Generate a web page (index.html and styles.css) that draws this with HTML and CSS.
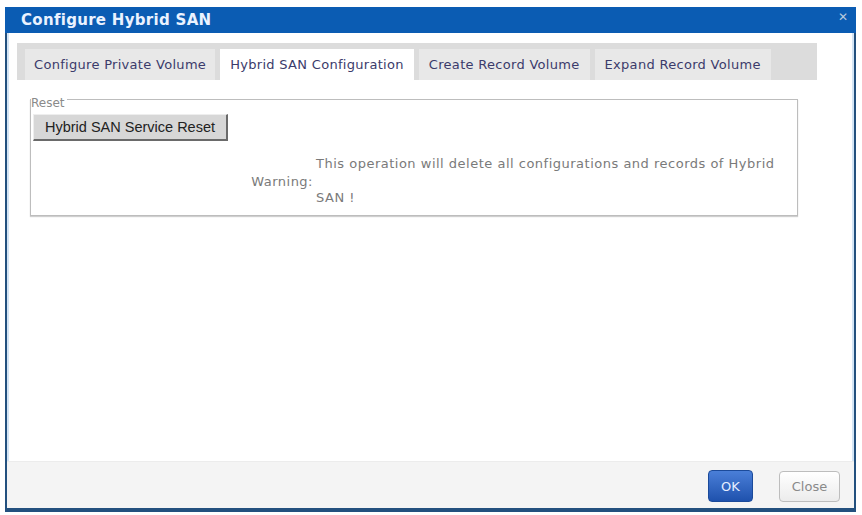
FILE: index.html
```html
<!DOCTYPE html>
<html lang="en">
<head>
  <meta charset="UTF-8">
  <title>Configure Hybrid SAN</title>
  <link rel="stylesheet" href="styles.css">
</head>
<body>
  <div class="dialog">
    <div class="titlebar">
      <span class="title">Configure Hybrid SAN</span>
      <span class="close-x">&#x2715;</span>
    </div>

    <div class="content">
      <div class="tabs">
        <div class="tab">Configure Private Volume</div>
        <div class="tab active">Hybrid SAN Configuration</div>
        <div class="tab">Create Record Volume</div>
        <div class="tab">Expand Record Volume</div>
      </div>

      <div class="group">
        <span class="group-label">Reset</span>
        <button class="btn-reset">Hybrid SAN Service Reset</button>
        <div class="warn-row">
          <div class="warn-label">Warning:</div>
          <div class="warn-text">This operation will delete all configurations and records of Hybrid SAN !</div>
        </div>
      </div>
    </div>

    <div class="footer">
      <button class="btn btn-ok">OK</button>
      <button class="btn btn-close">Close</button>
    </div>
  </div>
</body>
</html>
```

FILE: styles.css
```css
body {
  margin: 0;
  background: #fff;
  font-family: "DejaVu Sans", Verdana, sans-serif;
}

.dialog {
  margin: 7px 0 0 5px;
  width: 851px;
  height: 505px;
  box-sizing: border-box;
  border: 2px solid #23507e;
  border-top: 0;
  border-bottom-width: 4px;
  box-shadow: inset 2px 0 0 #d4e5f5, inset -2px 0 0 #d4e5f5, inset 0 -1px 0 #d4e5f5;
  display: flex;
  flex-direction: column;
  background: #fff;
}

.titlebar {
  height: 26px;
  margin: 0 -2px;
  background: #0b5cb3;
  display: flex;
  align-items: center;
  justify-content: space-between;
  padding: 0 8px 0 16px;
}

.title {
  color: #eaf2ff;
  font-weight: bold;
  font-size: 15px;
  letter-spacing: 0.3px;
}

.close-x {
  color: #b9c9dd;
  font-size: 12px;
  font-weight: bold;
  margin-top: -6px;
}

.content {
  flex: 1;
  padding: 10px 0 0 10px;
}

.tabs {
  width: 800px;
  height: 37px;
  box-sizing: border-box;
  background: #dcdcdc;
  display: flex;
  align-items: flex-end;
  gap: 5px;
  padding-left: 6px;
}

.tab {
  height: 31px;
  line-height: 31px;
  padding: 0 10px;
  background: #e8e8e8;
  color: #3b3b6b;
  font-size: 13px;
  letter-spacing: 0.3px;
}

.tab:first-child {
  margin-left: 2px;
  padding: 0 9px;
}

.tab.active {
  background: #fff;
}

.group {
  position: relative;
  margin: 19px 0 0 13px;
  width: 768px;
  box-sizing: border-box;
  border: 1px solid #bdbdbd;
  box-shadow: 0 1px 1px #cfcfcf;
  padding: 14px 0 0 2px;
}

.group-label {
  position: absolute;
  top: -3px;
  left: 0;
  background: #fff;
  color: #8a8a8a;
  font-size: 12px;
  line-height: 12px;
  padding-right: 2px;
}

.btn-reset {
  display: block;
  width: 195px;
  height: 27px;
  background: #d7d7d7;
  border: 1px solid #eeeeee;
  border-right: 2px solid #6a6a6a;
  border-bottom: 2px solid #6a6a6a;
  font-family: "Liberation Sans", Arial, sans-serif;
  font-size: 14.5px;
  color: #222;
  padding: 0;
}

.warn-row {
  display: flex;
  align-items: center;
  margin-top: 6px;
  color: #7a7a7a;
  font-size: 13px;
  letter-spacing: 0.5px;
}

.warn-label {
  width: 280px;
  text-align: right;
  padding-right: 3px;
}

.warn-text {
  width: 470px;
  line-height: 34px;
}

.footer {
  height: 47px;
  box-sizing: border-box;
  background: #f4f4f4;
  border-top: 1px solid #ececec;
  display: flex;
  justify-content: flex-end;
  align-items: flex-start;
  gap: 26px;
  padding: 8px 14px 0 0;
}

.btn {
  height: 32px;
  border-radius: 4px;
  font-family: "DejaVu Sans", Verdana, sans-serif;
  font-size: 13px;
  padding: 0;
}

.btn-ok {
  width: 45px;
  background: linear-gradient(#4a7fd8, #1f52ad);
  border: 1px solid #1b4a9a;
  color: #e6eeff;
}

.btn-close {
  width: 61px;
  margin-top: 1px;
  height: 31px;
  background: linear-gradient(#ffffff, #ececec);
  border: 1px solid #bdbdbd;
  color: #8a8a8a;
}
```
